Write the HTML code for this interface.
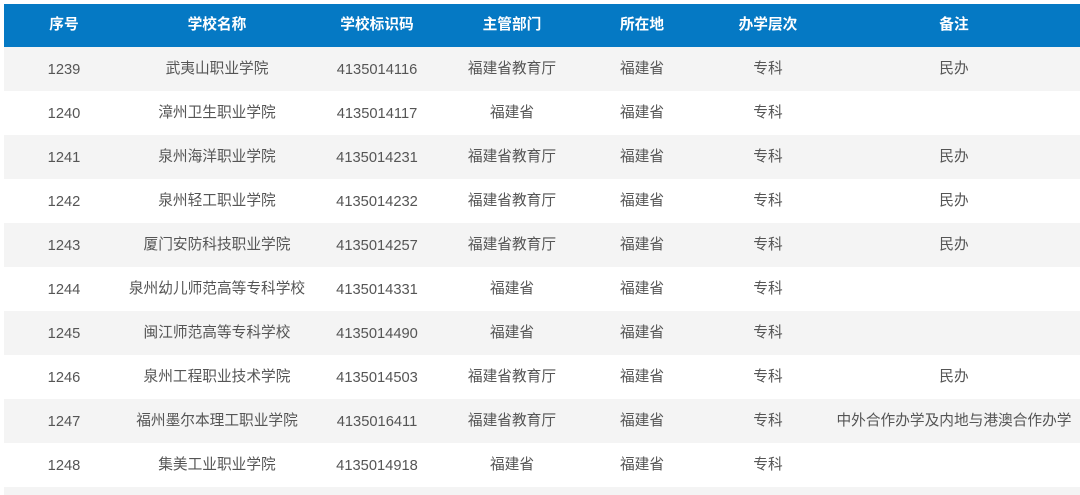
<!DOCTYPE html>
<html><head><meta charset="utf-8"><style>
*{margin:0;padding:0;box-sizing:border-box}
html,body{width:1080px;height:495px;overflow:hidden}
body{background:#fff;font-family:"Liberation Sans","Noto Sans CJK SC",sans-serif;font-size:14.7px;color:#555;position:relative}
.t{position:absolute;left:4px;top:4px;width:1076px}
.r{display:flex;height:44px;overflow:hidden}
.r div{text-align:center;white-space:nowrap;line-height:44px;height:44px}
.num{position:relative;top:1px}
.h{background:#0579c4;color:#fff;font-weight:bold;height:43px}
.h div{line-height:43px}
.g{background:#f4f4f4}
.c1{width:120px}.c2{width:186px}.c3{width:134px}.c4{width:136px}.c5{width:124px}.c6{width:128px}.c7{width:244px}
</style></head><body>
<div class="t">
<div class="r h"><div class="c1">序号</div><div class="c2">学校名称</div><div class="c3">学校标识码</div><div class="c4">主管部门</div><div class="c5">所在地</div><div class="c6">办学层次</div><div class="c7">备注</div></div>
<div class="r g"><div class="c1 num">1239</div><div class="c2">武夷山职业学院</div><div class="c3 num">4135014116</div><div class="c4">福建省教育厅</div><div class="c5">福建省</div><div class="c6">专科</div><div class="c7">民办</div></div>
<div class="r"><div class="c1 num">1240</div><div class="c2">漳州卫生职业学院</div><div class="c3 num">4135014117</div><div class="c4">福建省</div><div class="c5">福建省</div><div class="c6">专科</div><div class="c7"></div></div>
<div class="r g"><div class="c1 num">1241</div><div class="c2">泉州海洋职业学院</div><div class="c3 num">4135014231</div><div class="c4">福建省教育厅</div><div class="c5">福建省</div><div class="c6">专科</div><div class="c7">民办</div></div>
<div class="r"><div class="c1 num">1242</div><div class="c2">泉州轻工职业学院</div><div class="c3 num">4135014232</div><div class="c4">福建省教育厅</div><div class="c5">福建省</div><div class="c6">专科</div><div class="c7">民办</div></div>
<div class="r g"><div class="c1 num">1243</div><div class="c2">厦门安防科技职业学院</div><div class="c3 num">4135014257</div><div class="c4">福建省教育厅</div><div class="c5">福建省</div><div class="c6">专科</div><div class="c7">民办</div></div>
<div class="r"><div class="c1 num">1244</div><div class="c2">泉州幼儿师范高等专科学校</div><div class="c3 num">4135014331</div><div class="c4">福建省</div><div class="c5">福建省</div><div class="c6">专科</div><div class="c7"></div></div>
<div class="r g"><div class="c1 num">1245</div><div class="c2">闽江师范高等专科学校</div><div class="c3 num">4135014490</div><div class="c4">福建省</div><div class="c5">福建省</div><div class="c6">专科</div><div class="c7"></div></div>
<div class="r"><div class="c1 num">1246</div><div class="c2">泉州工程职业技术学院</div><div class="c3 num">4135014503</div><div class="c4">福建省教育厅</div><div class="c5">福建省</div><div class="c6">专科</div><div class="c7">民办</div></div>
<div class="r g"><div class="c1 num">1247</div><div class="c2">福州墨尔本理工职业学院</div><div class="c3 num">4135016411</div><div class="c4">福建省教育厅</div><div class="c5">福建省</div><div class="c6">专科</div><div class="c7">中外合作办学及内地与港澳合作办学</div></div>
<div class="r"><div class="c1 num">1248</div><div class="c2">集美工业职业学院</div><div class="c3 num">4135014918</div><div class="c4">福建省</div><div class="c5">福建省</div><div class="c6">专科</div><div class="c7"></div></div>
<div class="r g" style="height:10px"></div>
</div>
</body></html>
